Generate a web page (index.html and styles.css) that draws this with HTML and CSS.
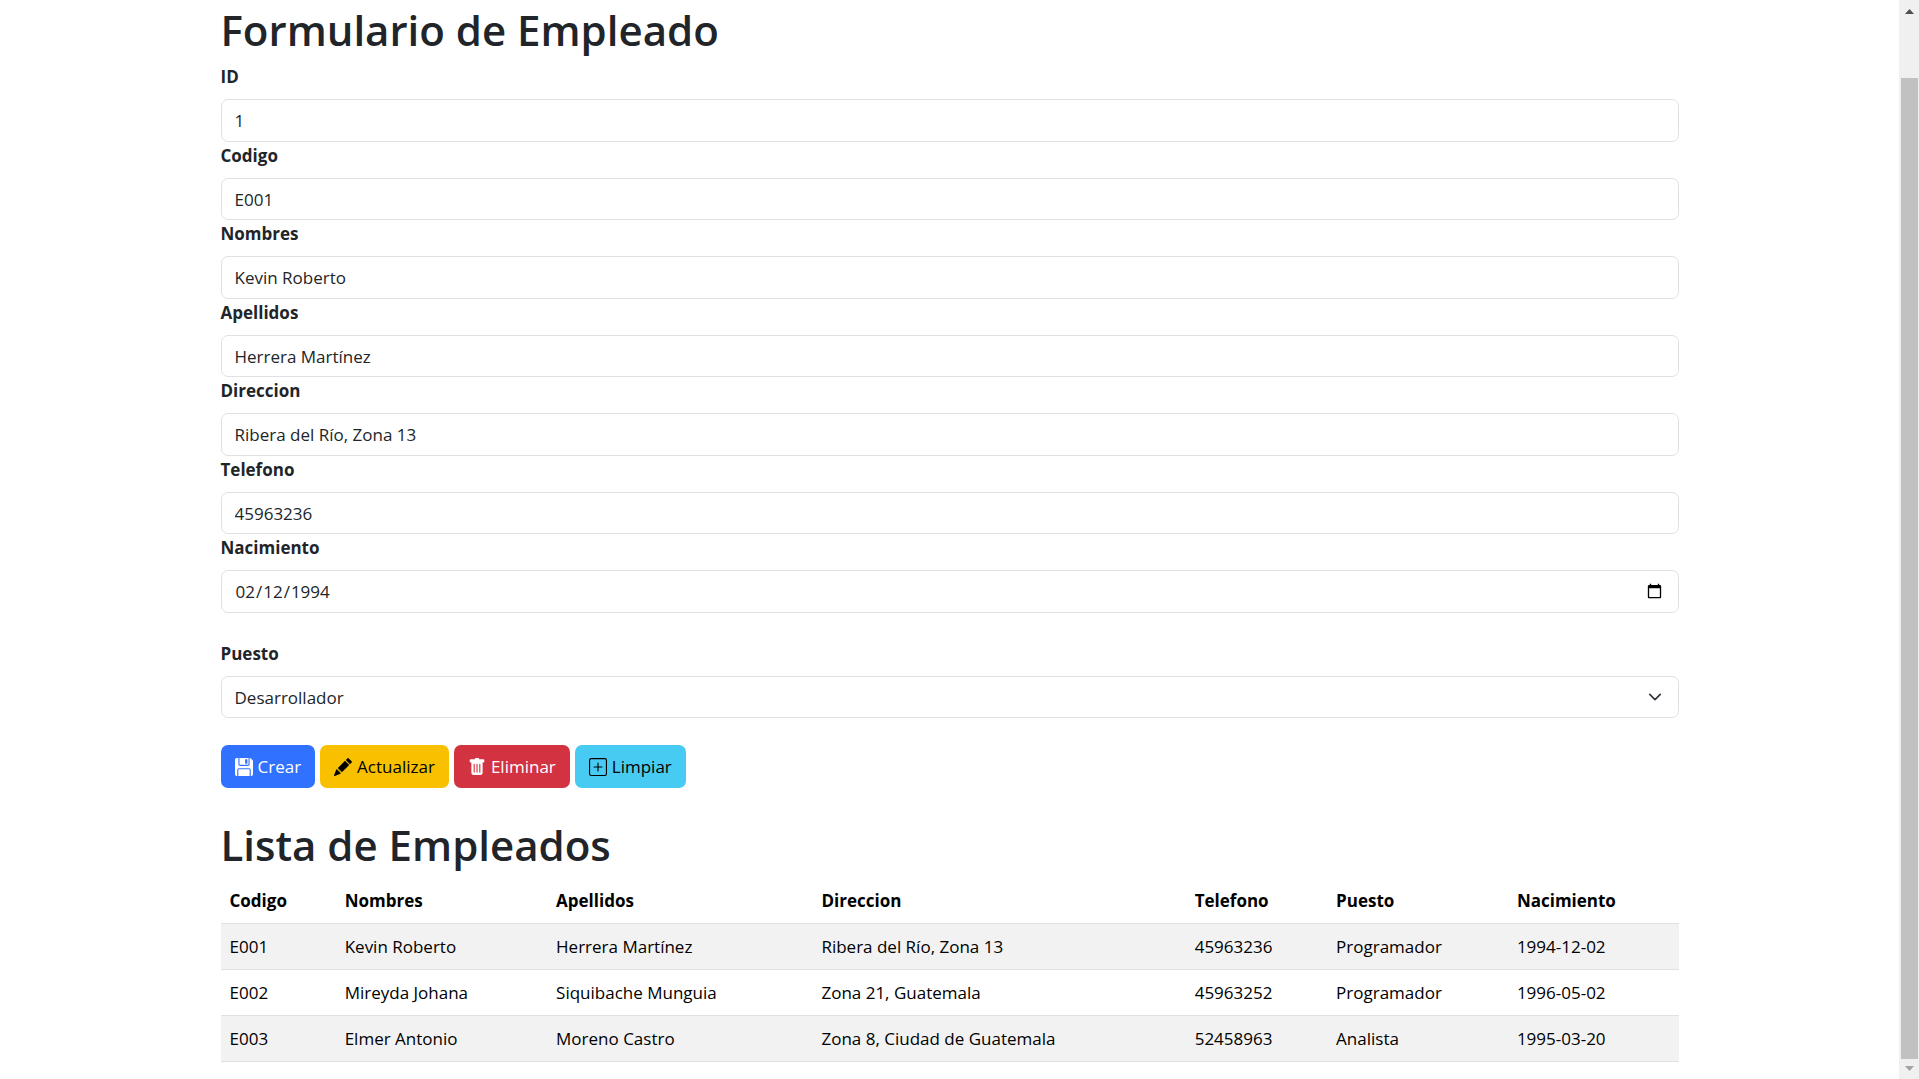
FILE: index.html
```html
<!DOCTYPE html>
<html lang="es">
<head>
<meta charset="utf-8">
<meta name="viewport" content="width=device-width, initial-scale=1">
<title>Empleados</title>
<link rel="stylesheet" href="styles.css">
</head>
<body>
<main class="container">
  <h1>Formulario de Empleado</h1>
  <form class="form">
    <div class="field"><label for="id">ID</label><input class="control" type="text" id="id" value="1" readonly></div>
    <div class="field"><label for="codigo">Codigo</label><input class="control" type="text" id="codigo" value="E001"></div>
    <div class="field"><label for="nombres">Nombres</label><input class="control" type="text" id="nombres" value="Kevin Roberto"></div>
    <div class="field"><label for="apellidos">Apellidos</label><input class="control" type="text" id="apellidos" value="Herrera Martínez"></div>
    <div class="field"><label for="direccion">Direccion</label><input class="control" type="text" id="direccion" value="Ribera del Río, Zona 13"></div>
    <div class="field"><label for="telefono">Telefono</label><input class="control" type="text" id="telefono" value="45963236"></div>
    <div class="field"><label for="nacimiento">Nacimiento</label><input class="control" type="date" id="nacimiento" value="1994-02-12"></div>
    <div class="field field-role"><label for="puesto">Puesto</label>
      <select class="control select" id="puesto">
        <option selected>Desarrollador</option>
        <option>Programador</option>
        <option>Analista</option>
      </select>
    </div>
    <div class="actions">
      <button type="button" class="btn btn-create"><svg class="icon" viewBox="0 0 16 16" aria-hidden="true"><path d="M0 1.500A1.500 1.500 0 0 1 1.500 0H3v5.500A1.500 1.500 0 0 0 4.500 7h7A1.500 1.500 0 0 0 13 5.500V0h.086a1.500 1.500 0 0 1 1.060.440l1.415 1.414A1.500 1.500 0 0 1 16 2.914V14.500a1.500 1.500 0 0 1-1.500 1.500H14v-5.500A1.500 1.500 0 0 0 12.500 9h-9A1.500 1.500 0 0 0 2 10.500V16h-.5A1.500 1.500 0 0 1 0 14.500z"/><path d="M3 16h10v-5.500a.5.5 0 0 0-.5-.5h-9a.5.5 0 0 0-.5.5zm9-16H4v5.500a.5.5 0 0 0 .5.5h7a.5.5 0 0 0 .5-.5zM9 1h2v4H9z"/></svg>Crear</button>
      <button type="button" class="btn btn-update"><svg class="icon" viewBox="0 0 16 16" aria-hidden="true"><path d="M12.854.146a.5.5 0 0 0-.707 0L10.500 1.793 14.207 5.500l1.647-1.646a.5.5 0 0 0 0-.708zm.646 6.061L9.793 2.500 3.293 9H3.500a.5.5 0 0 1 .5.5v.5h.5a.5.5 0 0 1 .5.5v.5h.5a.5.5 0 0 1 .5.5v.5h.5a.5.5 0 0 1 .5.5v.207zm-7.468 7.468A.5.5 0 0 1 6 13.500V13h-.5a.5.5 0 0 1-.5-.5V12h-.5a.5.5 0 0 1-.5-.5V11h-.5a.5.5 0 0 1-.5-.5V10h-.5a.5.5 0 0 1-.175-.032l-.179.178a.5.5 0 0 0-.110.168l-2 5a.5.5 0 0 0 .650.650l5-2a.5.5 0 0 0 .168-.110z"/></svg>Actualizar</button>
      <button type="button" class="btn btn-delete"><svg class="icon" viewBox="0 0 16 16" aria-hidden="true"><path d="M2.500 1a1 1 0 0 0-1 1v1a1 1 0 0 0 1 1H3v9a2 2 0 0 0 2 2h6a2 2 0 0 0 2-2V4h.5a1 1 0 0 0 1-1V2a1 1 0 0 0-1-1H10a1 1 0 0 0-1-1H7a1 1 0 0 0-1 1zm3 4a.5.5 0 0 1 .5.5v7a.5.5 0 0 1-1 0v-7a.5.5 0 0 1 .5-.5M8 5a.5.5 0 0 1 .5.5v7a.5.5 0 0 1-1 0v-7A.5.5 0 0 1 8 5m3 .5v7a.5.5 0 0 1-1 0v-7a.5.5 0 0 1 1 0"/></svg>Eliminar</button>
      <button type="button" class="btn btn-clear"><svg class="icon" viewBox="0 0 16 16" aria-hidden="true"><path d="M14 1a1 1 0 0 1 1 1v12a1 1 0 0 1-1 1H2a1 1 0 0 1-1-1V2a1 1 0 0 1 1-1zM2 0a2 2 0 0 0-2 2v12a2 2 0 0 0 2 2h12a2 2 0 0 0 2-2V2a2 2 0 0 0-2-2z"/><path d="M8 4a.5.5 0 0 1 .5.5v3h3a.5.5 0 0 1 0 1h-3v3a.5.5 0 0 1-1 0v-3h-3a.5.5 0 0 1 0-1h3v-3A.5.5 0 0 1 8 4"/></svg>Limpiar</button>
    </div>
  </form>
  <h1>Lista de Empleados</h1>
  <table class="table">
    <colgroup>
      <col class="c-code"><col class="c-name"><col class="c-surname"><col class="c-address"><col class="c-phone"><col class="c-role"><col class="c-birth">
    </colgroup>
    <thead>
      <tr><th scope="col">Codigo</th><th scope="col">Nombres</th><th scope="col">Apellidos</th><th scope="col">Direccion</th><th scope="col">Telefono</th><th scope="col">Puesto</th><th scope="col">Nacimiento</th></tr>
    </thead>
    <tbody>
      <tr><td>E001</td><td>Kevin Roberto</td><td>Herrera Martínez</td><td>Ribera del Río, Zona 13</td><td>45963236</td><td>Programador</td><td>1994-12-02</td></tr>
      <tr><td>E002</td><td>Mireyda Johana</td><td>Siquibache Munguia</td><td>Zona 21, Guatemala</td><td>45963252</td><td>Programador</td><td>1996-05-02</td></tr>
      <tr><td>E003</td><td>Elmer Antonio</td><td>Moreno Castro</td><td>Zona 8, Ciudad de Guatemala</td><td>52458963</td><td>Analista</td><td>1995-03-20</td></tr>
    </tbody>
  </table>
</main>
<div class="scrollbar" aria-hidden="true">
  <svg class="arrow arrow-up" viewBox="0 0 9 5"><path d="M4.500 0 9 5H0z"/></svg>
  <div class="thumb"></div>
  <svg class="arrow arrow-down" viewBox="0 0 9 5"><path d="M0 0h9L4.500 5z"/></svg>
</div>
</body>
</html>
```
FILE: styles.css
```css
* { box-sizing: border-box; }

body {
  margin: 0;
  display: flex;
  align-items: flex-start;
  background: #fff;
  color: #212529;
  font-family: "Segoe UI", "Open Sans", "Noto Sans", sans-serif;
  font-size: 17px;
  line-height: 27px;
}

.container {
  flex: 0 1 1486px;
  min-width: 0;
  margin: 0 auto;
  padding: 0 14px;
}

h1 {
  margin: 0 0 3px;
  font-size: 42px;
  font-weight: 600;
  line-height: 60px;
}

.form { margin-bottom: 27px; }

.field label {
  display: block;
  margin-bottom: 9px;
  font-weight: 700;
}

.control {
  display: block;
  width: 100%;
  height: 43px;
  margin: 0;
  padding: 7px 13px;
  border: 1px solid #dee2e6;
  border-radius: 7px;
  background: #fff;
  color: #212529;
  font: inherit;
}

.field:nth-child(even) .control { height: 42px; }

.field-role { margin: 27px 0; }

.select {
  appearance: none;
  background: #fff url("data:image/svg+xml,%3Csvg xmlns='http://www.w3.org/2000/svg' viewBox='0 0 16 16'%3E%3Cpath fill='none' stroke='%23343a40' stroke-linecap='round' stroke-linejoin='round' stroke-width='2' d='m2 5 6 6 6-6'/%3E%3C/svg%3E") no-repeat right 14px center / 18px 14px;
}

.actions { display: flex; gap: 5px; }

.btn {
  display: flex;
  align-items: center;
  gap: 5px;
  height: 43px;
  padding: 0 14px;
  border: 0;
  border-radius: 7px;
  font: inherit;
  cursor: pointer;
}

.icon { width: 18px; height: 18px; fill: currentColor; }

.btn-create { background: #3071ff; color: #fff; }
.btn-update { background: #f9c000; color: #000; }
.btn-delete { background: #d33241; color: #fff; }
.btn-clear { background: #48cbf3; color: #000; }

.table {
  width: 100%;
  table-layout: fixed;
  border-spacing: 0;
  color: #000;
}

.table th,
.table td {
  padding: 9px;
  border-bottom: 1px solid #dee2e6;
  text-align: left;
}

.table tbody tr:nth-child(odd) { background: #f2f2f2; }

.c-code { width: 7.9%; }
.c-name { width: 14.5%; }
.c-surname { width: 18.2%; }
.c-address { width: 25.6%; }
.c-phone { width: 9.7%; }
.c-role { width: 12.4%; }
.c-birth { width: 11.7%; }

.scrollbar {
  position: sticky;
  top: 0;
  flex: none;
  display: flex;
  flex-direction: column;
  align-items: center;
  width: 20px;
  height: 100vh;
  padding: 9px 1px 8px 2px;
  background: #f0f0f0;
}

.arrow { flex: none; width: 9px; height: 5px; }
.arrow-up { margin-bottom: 64px; fill: #505050; }
.arrow-down { margin-top: 7px; fill: #a3a3a3; }

.thumb { flex: 1; width: 17px; background: #c1c1c1; }
```
